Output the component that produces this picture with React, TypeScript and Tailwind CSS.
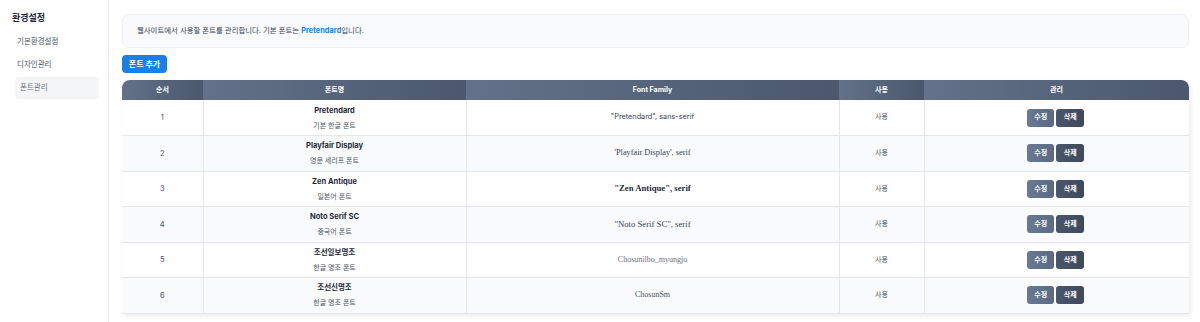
import React from "react";

const rows = [
  { n: 1, name: "Pretendard", desc: "기본 한글 폰트", fam: "\"Pretendard\", sans-serif", famCls: "font-['Inter','Noto_Sans_CJK_KR',sans-serif] text-[7.3px] text-[#374151]" },
  { n: 2, name: "Playfair Display", desc: "영문 세리프 폰트", fam: "'Playfair Display', serif", famCls: "font-['Liberation_Serif',serif] text-[8.3px] text-[#374151]" },
  { n: 3, name: "Zen Antique", desc: "일본어 폰트", fam: "\"Zen Antique\", serif", famCls: "font-['Liberation_Serif',serif] font-bold text-[8.7px] text-[#1f2937]" },
  { n: 4, name: "Noto Serif SC", desc: "중국어 폰트", fam: "\"Noto Serif SC\", serif", famCls: "font-['Liberation_Serif',serif] text-[8.7px] text-[#374151]" },
  { n: 5, name: "조선일보명조", desc: "한글 명조 폰트", fam: "Chosunilbo_myungjo", famCls: "font-['Liberation_Serif',serif] text-[8px] text-[#6b7280]" },
  { n: 6, name: "조선신명조", desc: "한글 명조 폰트", fam: "ChosunSm", famCls: "font-['Liberation_Serif',serif] text-[8px] text-[#4b5563]" },
];

const th = "h-[20px] p-0 text-[7px] font-bold text-white text-center bg-gradient-to-r from-[#63728a] to-[#4a576d]";

export default function App() {
  return (
    <div className="flex min-h-[322px] w-[1200px] bg-white font-['Inter','Noto_Sans_CJK_KR',sans-serif] text-[#374151]">
      <aside className="w-[109px] shrink-0 border-r border-[#e8eaee] px-[12px] pt-[11px]">
        <div className="text-[9px] font-bold text-[#1f2937] leading-[14px]">환경설정</div>
        <nav className="mt-[6px] flex flex-col gap-[1px]">
          <div className="h-[22px] flex items-center px-[5px] text-[7.5px] text-[#4b5563]">기본환경설정</div>
          <div className="h-[22px] flex items-center px-[5px] text-[7.5px] text-[#4b5563]">디자인관리</div>
          <div className="ml-[3px] w-[84px] h-[22px] flex items-center px-[5px] rounded-[4px] bg-[#f4f5f7] text-[7.5px] text-[#6b7280]">폰트관리</div>
        </nav>
      </aside>
      <main className="flex-1 pl-[13px] pr-[11px] pt-[14px]">
        <div className="h-[34px] flex items-center rounded-[7px] border border-[#eef0f3] bg-[#f8fafc] px-[14px] text-[7.4px] text-[#374151]">
          <span>
            웹사이트에서 사용할 폰트를 관리합니다. 기본 폰트는 <b className="text-[#2b7fd4] font-bold">Pretendard</b>입니다.
          </span>
        </div>
        <button className="mt-[7px] h-[18px] w-[45px] rounded-[4px] bg-[#1a80e5] text-[8px] font-bold text-white flex items-center justify-center">
          폰트 추가
        </button>
        <div className="mt-[7px] w-[1067px] overflow-hidden rounded-t-[8px] shadow-[2px_2px_4px_rgba(0,0,0,0.08)]">
          <table className="w-full table-fixed border-collapse">
            <colgroup>
              <col className="w-[81px]" />
              <col className="w-[263px]" />
              <col className="w-[373px]" />
              <col className="w-[85px]" />
              <col className="w-[265px]" />
            </colgroup>
            <thead>
              <tr>
                <th className={th}>순서</th>
                <th className={th}>폰트명</th>
                <th className={th}>Font Family</th>
                <th className={th}>사용</th>
                <th className={th}>관리</th>
              </tr>
            </thead>
            <tbody>
              {rows.map((r, i) => (
                <tr key={r.n} className={i % 2 === 1 ? "bg-[#f8fafc]" : "bg-white"}>
                  <td className="h-[35.5px] p-0 border-b border-[#e5e7eb] text-center text-[7.5px] text-[#4b5563]">{r.n}</td>
                  <td className="h-[35.5px] p-0 border-b border-l border-[#e5e7eb] text-center">
                    <div className="text-[7.5px] font-bold text-[#1f2937] leading-[11px]">{r.name}</div>
                    <div className="mt-[5px] text-[7px] text-[#4b5563] leading-[10px]">{r.desc}</div>
                  </td>
                  <td className={"h-[35.5px] p-0 border-b border-l border-[#e5e7eb] text-center " + r.famCls}>{r.fam}</td>
                  <td className="h-[35.5px] p-0 border-b border-l border-[#e5e7eb] text-center text-[7px] text-[#4b5563]">사용</td>
                  <td className="h-[35.5px] p-0 border-b border-l border-[#e5e7eb]">
                    <div className="flex items-center justify-center gap-[2px] pr-[2px]">
                      <span className="h-[18px] w-[27px] rounded-[3px] bg-gradient-to-r from-[#6a7a94] to-[#5b6a83] text-[7px] font-bold text-white flex items-center justify-center">수정</span>
                      <span className="h-[18px] w-[28px] rounded-[3px] bg-gradient-to-r from-[#4a566b] to-[#3e495c] text-[7px] font-bold text-white flex items-center justify-center">삭제</span>
                    </div>
                  </td>
                </tr>
              ))}
            </tbody>
          </table>
        </div>
      </main>
    </div>
  );
}
